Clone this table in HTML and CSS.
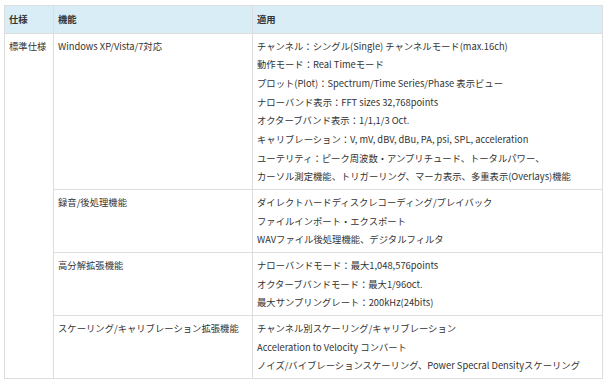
FILE: index.html
```html
<!DOCTYPE html>
<html lang="ja">
<head>
<meta charset="utf-8">
<title>仕様</title>
<link rel="stylesheet" href="styles.css">
</head>
<body>
<table class="spec">
  <colgroup>
    <col class="c1">
    <col class="c2">
    <col class="c3">
  </colgroup>
  <thead>
    <tr>
      <th>仕様</th>
      <th>機能</th>
      <th>適用</th>
    </tr>
  </thead>
  <tbody>
    <tr>
      <td rowspan="4">標準仕様</td>
      <td>Windows XP/Vista/7対応</td>
      <td>チャンネル：シングル(Single) チャンネルモード(max.16ch)<br>動作モード：Real Timeモード<br>プロット(Plot)：Spectrum/Time Series/Phase 表示ビュー<br>ナローバンド表示：FFT sizes 32,768points<br>オクターブバンド表示：1/1,1/3 Oct.<br>キャリブレーション：V, mV, dBV, dBu, PA, psi, SPL, acceleration<br>ユーテリティ：ピーク周波数・アンプリチュード、トータルパワー、<br>カーソル測定機能、トリガーリング、マーカ表示、多重表示(Overlays)機能</td>
    </tr>
    <tr>
      <td>録音/後処理機能</td>
      <td>ダイレクトハードディスクレコーディング/プレイバック<br>ファイルインポート・エクスポート<br>WAVファイル後処理機能、デジタルフィルタ</td>
    </tr>
    <tr>
      <td>高分解拡張機能</td>
      <td>ナローバンドモード：最大1,048,576points<br>オクターブバンドモード：最大1/96oct.<br>最大サンプリングレート：200kHz(24bits)</td>
    </tr>
    <tr>
      <td>スケーリング/キャリブレーション拡張機能</td>
      <td>チャンネル別スケーリング/キャリブレーション<br>Acceleration to Velocity コンバート<br>ノイズ/バイブレーションスケーリング、Power Specral Densityスケーリング</td>
    </tr>
  </tbody>
</table>
</body>
</html>
```

FILE: styles.css
```css
html, body {
  background: #ffffff;
}
body {
  margin: 0;
  padding: 5px 6px 0 4px;
  font-family: "Noto Sans CJK JP", "Noto Sans", sans-serif;
  font-size: 9.33px;
  line-height: 18.67px;
  color: #333333;
}
.spec {
  width: 598px;
  border-collapse: collapse;
  table-layout: fixed;
}
.c1 { width: 49px; }
.c2 { width: 199px; }
.c3 { width: 350px; }
.spec th,
.spec td {
  border: 1px solid #dddddd;
  text-align: left;
  vertical-align: top;
  padding: 3px 4px;
  white-space: nowrap;
}
.spec th {
  background: #d9edf7;
  font-weight: bold;
  padding: 4px 4px 4px 4px;
}
```
